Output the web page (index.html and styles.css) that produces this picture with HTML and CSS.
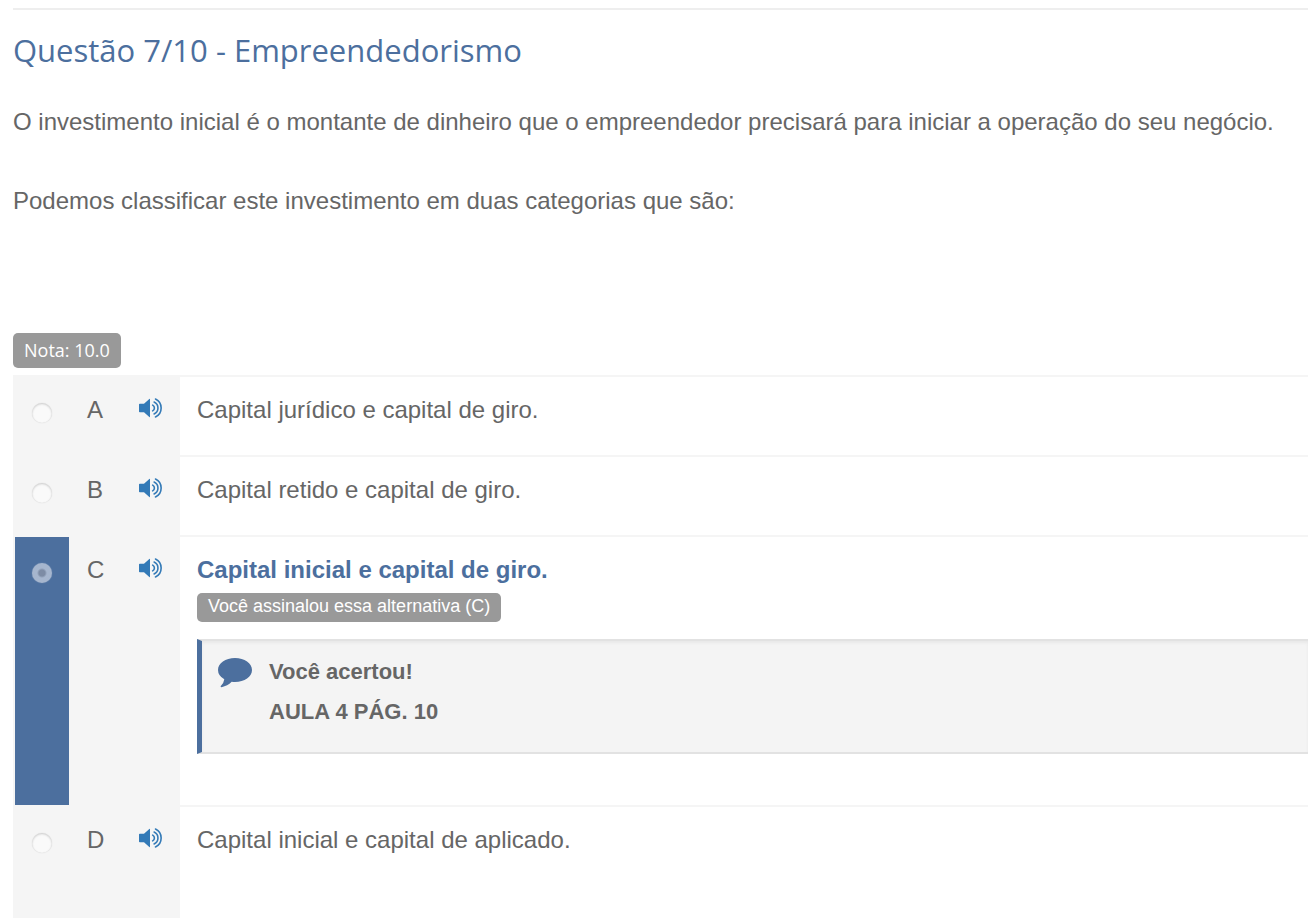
FILE: index.html
```html
<!DOCTYPE html>
<html lang="pt-BR">
<head>
<meta charset="utf-8">
<meta name="viewport" content="width=device-width, initial-scale=1">
<title>Questão 7/10 - Empreendedorismo</title>
<link rel="stylesheet" href="styles.css">
</head>
<body>
<svg class="sprite" aria-hidden="true">
  <symbol id="volume" viewBox="0 0 24 20">
    <path d="M0.8 5.8H5L10.3 1Q11 .5 11 1.4V18.6Q11 19.500 10.300 19L5 14.200H.8Q0 14.200 0 13.400V6.600Q0 5.800 .8 5.800Z" fill="currentColor"/>
    <path d="M13.700 7.100A3.300 3.300 0 0 1 13.700 12.900M15.100 4A6.600 6.600 0 0 1 15.100 16M16.500 1A10 10 0 0 1 16.500 19" fill="none" stroke="currentColor" stroke-width="1.600" stroke-linecap="round"/>
  </symbol>
</svg>
<main class="question">
  <h1 class="title">Questão 7/10 - Empreendedorismo</h1>
  <div class="statement">
    <p>O investimento inicial é o montante de dinheiro que o empreendedor precisará para iniciar a operação do seu negócio.</p>
    <p>Podemos classificar este investimento em duas categorias que são:</p>
  </div>
  <span class="tag score">Nota: 10.0</span>
  <div class="options" role="radiogroup" aria-label="Alternativas">
    <div class="option">
      <div class="pick"><input class="radio" type="radio" name="answer" id="a"></div>
      <label class="letter" for="a">A</label>
      <button class="listen" type="button" aria-label="Ouvir alternativa A"><svg class="volume"><use href="#volume"/></svg></button>
      <div class="answer"><p>Capital jurídico e capital de giro.</p></div>
    </div>
    <div class="option">
      <div class="pick"><input class="radio" type="radio" name="answer" id="b"></div>
      <label class="letter" for="b">B</label>
      <button class="listen" type="button" aria-label="Ouvir alternativa B"><svg class="volume"><use href="#volume"/></svg></button>
      <div class="answer"><p>Capital retido e capital de giro.</p></div>
    </div>
    <div class="option selected">
      <div class="pick"><input class="radio" type="radio" name="answer" id="c" checked></div>
      <label class="letter" for="c">C</label>
      <button class="listen" type="button" aria-label="Ouvir alternativa C"><svg class="volume"><use href="#volume"/></svg></button>
      <div class="answer">
        <p>Capital inicial e capital de giro.</p>
        <span class="tag chosen">Você assinalou essa alternativa (C)</span>
        <div class="feedback">
          <svg class="bubble" viewBox="0 0 34 30" aria-hidden="true"><path d="M17 0C26.500 0 34 5.300 34 12S26.500 24 17 24Q15.300 24 13.700 23.800Q9.500 28 3.600 29.200Q2.700 29.200 2.600 28.500Q2.600 28 3.200 27.400Q5.800 25 6.300 21.300Q0 17.700 0 12C0 5.300 7.500 0 17 0Z"/></svg>
          <div class="message"><p>Você acertou!</p><p>AULA 4 PÁG. 10</p></div>
        </div>
      </div>
    </div>
    <div class="option">
      <div class="pick"><input class="radio" type="radio" name="answer" id="d"></div>
      <label class="letter" for="d">D</label>
      <button class="listen" type="button" aria-label="Ouvir alternativa D"><svg class="volume"><use href="#volume"/></svg></button>
      <div class="answer"><p>Capital inicial e capital de aplicado.</p></div>
    </div>
  </div>
</main>
</body>
</html>
```
FILE: styles.css
```css
* { box-sizing: border-box; }

body {
  margin: 0;
  background: #fff;
  color: #666;
  font-family: "Liberation Sans", Arial, sans-serif;
  font-size: 24px;
  line-height: 40px;
}

p { margin: 0; }

.sprite { display: none; }

.question {
  display: flex;
  flex-direction: column;
  min-height: 100vh;
  margin-left: 13px;
  padding-top: 8px;
}

.title {
  margin: 0;
  padding: 20px 0 32px;
  border-top: 2px solid #eee;
  color: #4c6f9e;
  font: 400 31px/40px "Open Sans", sans-serif;
}

.statement {
  display: grid;
  gap: 39px;
  padding-bottom: 112px;
}

.tag {
  align-self: flex-start;
  border-radius: 5px;
  background: #999;
  color: #fff;
  font-size: 18px;
}

.score {
  margin-bottom: 7px;
  padding: 0 11px;
  font-family: "Open Sans", sans-serif;
  font-weight: 500;
  line-height: 35px;
}

.options {
  display: flex;
  flex: 1;
  flex-direction: column;
}

.option {
  display: grid;
  grid-template-columns: 56px 54px 57px 1fr;
  min-height: 80px;
  background: #f5f5f5;
}

.option:last-child { flex: 1; }

.pick {
  display: flex;
  align-items: flex-start;
  justify-content: center;
  padding-top: 26px;
  border: solid #f5f5f5;
  border-width: 2px 0 0 2px;
}

.selected .pick { background: #4c6f9e; }

.radio {
  appearance: none;
  width: 20px;
  height: 20px;
  margin: 0;
  border-radius: 50%;
  background: #fafafa;
  box-shadow: inset 0 1px 2px #ccc, 0 0 1px #ccc;
}

.radio:checked {
  background: radial-gradient(circle, #7d8ca5 0 3px, #a6b6ce 5px);
  box-shadow: 0 0 1px #a6b6ce;
}

.letter {
  padding: 15px 0 0 18px;
}

.listen {
  display: flex;
  align-items: flex-start;
  padding: 23px 0 0 16px;
  border: 0;
  background: none;
  color: #337ab7;
}

.volume {
  width: 24px;
  height: 20px;
}

.answer {
  padding: 13px 0 0 17px;
  border-top: 2px solid #f5f5f5;
  background: #fff;
}

.selected .answer {
  display: flex;
  flex-direction: column;
  padding-bottom: 51px;
}

.selected .answer > p {
  color: #4c6f9e;
  font-weight: 700;
}

.chosen {
  margin-top: 3px;
  padding: 0 11px 3px;
  line-height: 26px;
}

.feedback {
  display: flex;
  gap: 17px;
  margin-top: 17px;
  padding: 11px 0 20px 16px;
  border: solid #e2e2e2;
  border-width: 2px 0 2px 5px;
  border-left-color: #4c6f9e;
  background: #f4f4f4;
  box-shadow: inset 0 2px 3px #e8e8e8;
}

.bubble {
  width: 34px;
  height: 30px;
  margin-top: 6px;
  fill: #4c6f9e;
}

.message {
  font-size: 22px;
  font-weight: 700;
}
```
